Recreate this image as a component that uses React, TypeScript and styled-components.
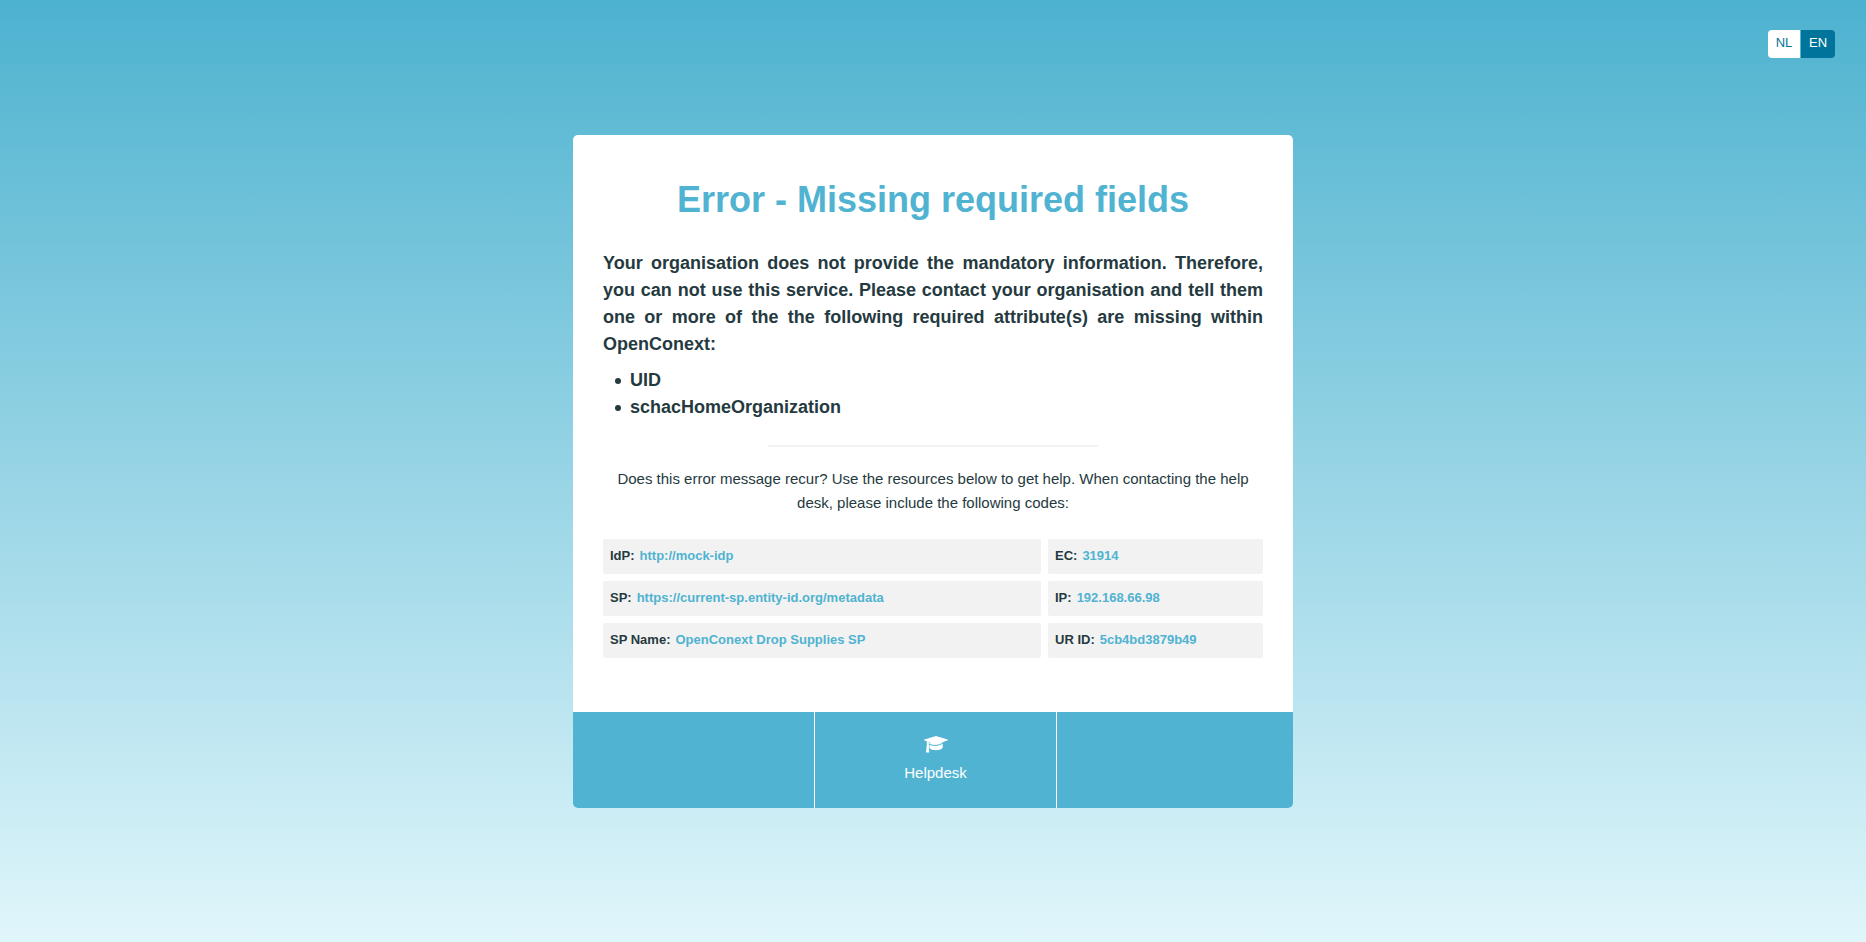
import React from 'react';
import styled, { createGlobalStyle } from 'styled-components';

const GlobalStyle = createGlobalStyle`
  * { box-sizing: border-box; }
  body {
    margin: 0;
    color: #253a40;
    font-family: "Nimbus Sans", Helvetica, "Liberation Sans", Arial, sans-serif;
    font-size: 15px;
    line-height: 24px;
  }
`;

const Page = styled.div`
  min-height: 100vh;
  padding: 30px 31px;
  background: linear-gradient(#4db2cf, #e0f6fb);
`;

const Languages = styled.nav`
  display: flex;
  justify-content: flex-end;
  gap: 1px;
`;

const Language = styled.button<{ $active?: boolean }>`
  width: ${(p) => (p.$active ? '34px' : '32px')};
  height: 28px;
  padding: 0 0 2px;
  border: 0;
  border-radius: ${(p) => (p.$active ? '0 4px 4px 0' : '4px 0 0 4px')};
  background: ${(p) => (p.$active ? '#00749a' : '#fff')};
  color: ${(p) => (p.$active ? '#fff' : '#00749a')};
  font: inherit;
  font-size: 13px;
`;

const Card = styled.main`
  max-width: 720px;
  margin: 77px auto 0;
  overflow: hidden;
  border-radius: 5px;
  background: #fff;
`;

const Content = styled.div`
  padding: 41px 30px 54px;
`;

const Title = styled.h1`
  margin: 0 0 26px;
  color: #4fb3d1;
  font-size: 36px;
  line-height: 48px;
  text-align: center;
`;

const Message = styled.div`
  font-size: 18px;
  font-weight: 700;
  line-height: 27px;
  text-align: justify;
`;

const Paragraph = styled.p`
  margin: 0;
`;

const Attributes = styled.ul`
  margin: 9px 0 0;
  padding-left: 12px;
  list-style: none;
`;

const Attribute = styled.li`
  display: flex;
  align-items: center;
  gap: 9px;

  &::before {
    content: '';
    width: 6px;
    height: 6px;
    border-radius: 50%;
    background: currentColor;
  }
`;

const Divider = styled.hr`
  width: 50%;
  height: 2px;
  margin: 24px auto 20px;
  border: 0;
  background: #f2f2f2;
`;

const Hint = styled.p`
  margin: 0 0 24px;
  text-align: center;
`;

const Codes = styled.dl`
  display: grid;
  grid-template-columns: 438fr 215fr;
  gap: 7px;
  margin: 0;
`;

const Code = styled.div`
  display: flex;
  gap: 5px;
  padding: 5px 7px 6px;
  border-radius: 2px;
  background: #f2f2f2;
  font-size: 13px;
  font-weight: 700;
`;

const Label = styled.dt`
  white-space: nowrap;
`;

const Value = styled.dd`
  margin: 0;
  color: #4fb3d1;
`;

const Footer = styled.footer`
  display: grid;
  grid-template-columns: 242fr 242fr 236fr;
  background: #4fb3d1;
`;

const Cell = styled.div`
  border-right: 1px solid #fff;

  &:last-child {
    border-right: 0;
  }
`;

const Help = styled.a`
  display: flex;
  flex-direction: column;
  align-items: center;
  gap: 8px;
  padding: 24px 0 23px;
  color: #fff;
  text-decoration: none;
`;

const GraduationCap = () => (
  <svg width="24" height="17" viewBox="0 0 24 17" fill="currentColor" aria-hidden="true">
    <path d="M12 0 23.5 3.6Q24.3 4 23.5 4.4L12 8.2.5 4.4Q-.3 4 .5 3.6Z" />
    <path d="M5.4 6.2H18.7V11.8Q17 14.2 12 14.2 7 14.2 5.4 12Z" />
    <path d="M2.8 5 4.8 5.7V9.8Q5.4 10.4 4.8 11.1L5.3 16.5H2L2.6 11.1Q2 10.4 2.8 9.8Z" />
    <path d="M5 8.2Q12 11.2 19 7.2" fill="none" stroke="#4fb3d1" strokeWidth="1" />
  </svg>
);

const codes = [
  ['IdP:', 'http://mock-idp'],
  ['EC:', '31914'],
  ['SP:', 'https://current-sp.entity-id.org/metadata'],
  ['IP:', '192.168.66.98'],
  ['SP Name:', 'OpenConext Drop Supplies SP'],
  ['UR ID:', '5cb4bd3879b49'],
];

export default function App() {
  return (
    <Page>
      <GlobalStyle />
      <Languages aria-label="Language">
        <Language type="button">NL</Language>
        <Language type="button" $active>EN</Language>
      </Languages>
      <Card>
        <Content>
          <Title>Error - Missing required fields</Title>
          <Message>
            <Paragraph>
              Your organisation does not provide the mandatory information. Therefore, you can not use
              this service. Please contact your organisation and tell them one or more of the the
              following required attribute(s) are missing within OpenConext:
            </Paragraph>
            <Attributes>
              <Attribute>UID</Attribute>
              <Attribute>schacHomeOrganization</Attribute>
            </Attributes>
          </Message>
          <Divider />
          <Hint>
            Does this error message recur? Use the resources below to get help. When contacting the
            help desk, please include the following codes:
          </Hint>
          <Codes>
            {codes.map(([label, value]) => (
              <Code key={label}>
                <Label>{label}</Label>
                <Value>{value}</Value>
              </Code>
            ))}
          </Codes>
        </Content>
        <Footer>
          <Cell />
          <Cell>
            <Help href="#helpdesk">
              <GraduationCap />
              Helpdesk
            </Help>
          </Cell>
          <Cell />
        </Footer>
      </Card>
    </Page>
  );
}
